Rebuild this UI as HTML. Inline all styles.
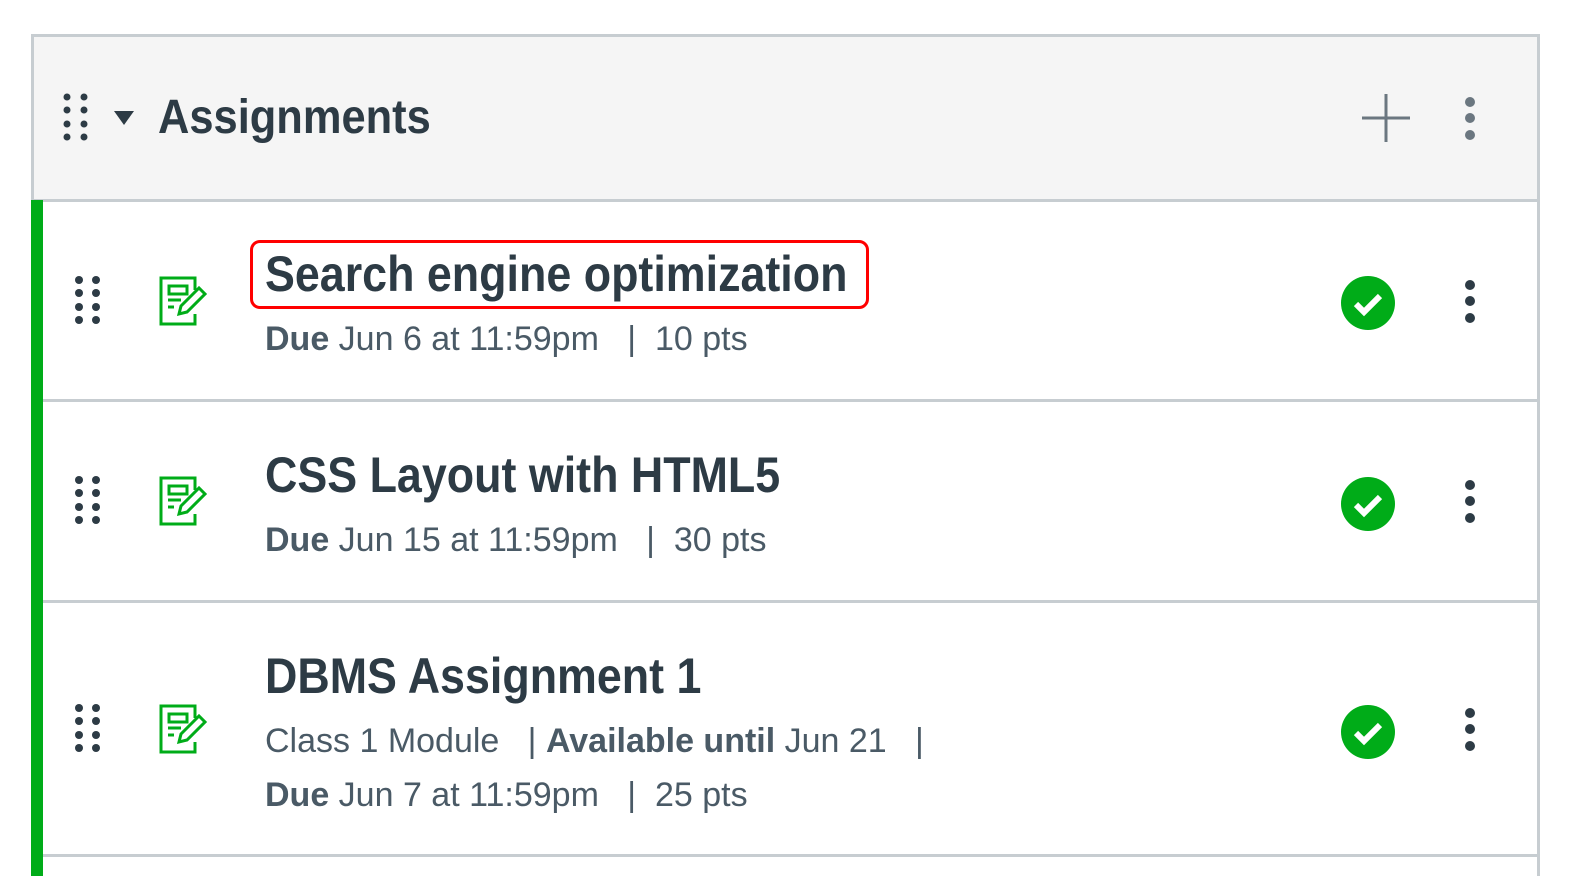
<!DOCTYPE html>
<html><head><meta charset="utf-8"><style>
html,body{margin:0;width:1570px;height:876px;overflow:hidden}
body{background:#fff;position:relative;font-family:"Liberation Sans",sans-serif}
.box{position:absolute;left:31px;top:34px;width:1503px;height:842px;border:3px solid #c7cdd1;border-bottom:none}
.hdr{position:absolute;left:34px;top:37px;width:1503px;height:162px;background:#f5f5f5;border-bottom:3px solid #c7cdd1}
.green{position:absolute;left:31px;top:200px;width:12px;height:676px;background:#00ac18}
.sep{position:absolute;left:43px;width:1494px;height:3px;background:#c7cdd1}
.t{position:absolute;color:#2d3b45;font-weight:bold;white-space:nowrap;transform-origin:0 0}
.m{position:absolute;color:#4a5a66;font-size:34px;white-space:nowrap;transform-origin:0 0}
.m b{color:#4a5a66}
svg{position:absolute}
</style></head><body>
<div class="box"></div>
<div class="hdr"></div>
<div class="green"></div>
<div class="sep" style="top:399px"></div>
<div class="sep" style="top:600px"></div>
<div class="sep" style="top:854px"></div>

<svg style="left:60px;top:90px" width="34" height="54"><g fill="#2d3b45"><circle cx="7" cy="7" r="3.5"/><circle cx="24" cy="7" r="3.5"/><circle cx="7" cy="20" r="3.5"/><circle cx="24" cy="20" r="3.5"/><circle cx="7" cy="34" r="3.5"/><circle cx="24" cy="34" r="3.5"/><circle cx="7" cy="47" r="3.5"/><circle cx="24" cy="47" r="3.5"/></g></svg>
<svg style="left:112px;top:108px" width="24" height="20"><path d="M2 3H22L12 17Z" fill="#2d3b45"/></svg>
<div class="t" style="left:158px;top:90px;font-size:48px;transform:scaleX(0.905)">Assignments</div>
<svg style="left:1360px;top:92px" width="52" height="52"><path d="M26 2V50M2 26H50" stroke="#6b7780" stroke-width="3"/></svg>
<svg style="left:1460px;top:94px" width="20" height="50"><g fill="#6b7780"><circle cx="10" cy="8" r="5"/><circle cx="10" cy="24" r="5"/><circle cx="10" cy="41" r="5"/></g></svg>

<svg width="0" height="0" style="position:absolute">
<defs>
<g id="drag" fill="#2d3b45"><circle cx="7" cy="7" r="4"/><circle cx="24" cy="7" r="4"/><circle cx="7" cy="20" r="4"/><circle cx="24" cy="20" r="4"/><circle cx="7" cy="34" r="4"/><circle cx="24" cy="34" r="4"/><circle cx="7" cy="47" r="4"/><circle cx="24" cy="47" r="4"/></g>
<g id="ic" fill="none" stroke="#00ac18" stroke-width="3"><path d="M36 14V2H2V48H36V38"/><rect x="10" y="10" width="18" height="8"/><path d="M9 24H22M9 31H15"/><path d="M20 38L22 30L40 12L46 18L28 36Z"/></g>
<g id="chk"><circle cx="27" cy="27" r="27" fill="#00ac18"/><path d="M15 28L23 36L39 20" stroke="#fff" stroke-width="6" fill="none"/></g>
<g id="kb" fill="#2d3b45"><circle cx="10" cy="8" r="5"/><circle cx="10" cy="24" r="5"/><circle cx="10" cy="41" r="5"/></g>
</defs></svg>

<svg style="left:72px;top:273px" width="34" height="56"><use href="#drag"/></svg>
<svg style="left:159px;top:276px" width="50" height="50"><use href="#ic"/></svg>
<div style="position:absolute;left:250px;top:240px;width:613px;height:63px;border:3px solid #f00;border-radius:10px"></div>
<div class="t" style="left:265px;top:245px;font-size:50px;transform:scaleX(0.896)">Search engine optimization</div>
<div class="m" style="left:265px;top:320px"><b>Due</b> Jun 6 at 11:59pm &nbsp;&nbsp;| &nbsp;10 pts</div>
<svg style="left:1341px;top:276px" width="54" height="54"><use href="#chk"/></svg>
<svg style="left:1460px;top:277px" width="20" height="50"><use href="#kb"/></svg>

<svg style="left:72px;top:473px" width="34" height="56"><use href="#drag"/></svg>
<svg style="left:159px;top:476px" width="50" height="50"><use href="#ic"/></svg>
<div class="t" style="left:265px;top:446px;font-size:50px;transform:scaleX(0.896)">CSS Layout with HTML5</div>
<div class="m" style="left:265px;top:521px"><b>Due</b> Jun 15 at 11:59pm &nbsp;&nbsp;| &nbsp;30 pts</div>
<svg style="left:1341px;top:477px" width="54" height="54"><use href="#chk"/></svg>
<svg style="left:1460px;top:477px" width="20" height="50"><use href="#kb"/></svg>

<svg style="left:72px;top:701px" width="34" height="56"><use href="#drag"/></svg>
<svg style="left:159px;top:704px" width="50" height="50"><use href="#ic"/></svg>
<div class="t" style="left:265px;top:647px;font-size:50px;transform:scaleX(0.896)">DBMS Assignment 1</div>
<div class="m" style="left:265px;top:722px">Class 1 Module &nbsp;&nbsp;| <b>Available until</b> Jun 21 &nbsp;&nbsp;|</div>
<div class="m" style="left:265px;top:776px"><b>Due</b> Jun 7 at 11:59pm &nbsp;&nbsp;| &nbsp;25 pts</div>
<svg style="left:1341px;top:705px" width="54" height="54"><use href="#chk"/></svg>
<svg style="left:1460px;top:705px" width="20" height="50"><use href="#kb"/></svg>
</body></html>
